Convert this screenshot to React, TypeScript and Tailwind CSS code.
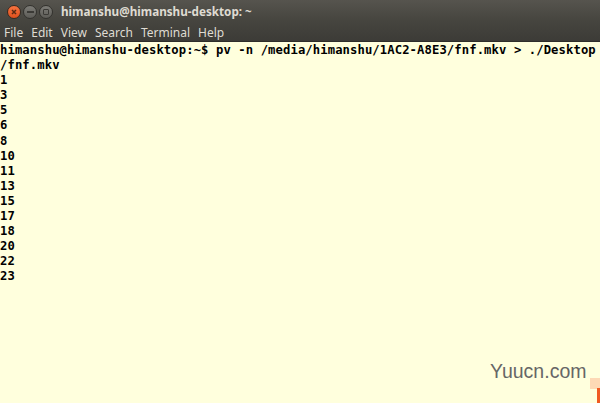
import React from "react";

const lines = [
  "himanshu@himanshu-desktop:~$ pv -n /media/himanshu/1AC2-A8E3/fnf.mkv > ./Desktop",
  "/fnf.mkv",
  "1",
  "3",
  "5",
  "6",
  "8",
  "10",
  "11",
  "13",
  "15",
  "17",
  "18",
  "20",
  "22",
  "23",
];

export default function App() {
  return (
    <div className="w-[600px] h-[403px] flex flex-col overflow-hidden bg-[#ffffdd]">
      <div className="bg-gradient-to-b from-[#56544e] via-[#46453f] to-[#3c3b37] flex flex-col border-b border-[#2e2d2a]">
        <div className="h-[24px] flex items-center pl-[7px]">
          <div className="flex items-center gap-[2px]">
            <div className="w-[14px] h-[14px] rounded-full bg-gradient-to-b from-[#f7733f] to-[#e0501b] flex items-center justify-center border border-[#3a2a20]">
              <svg width="6" height="6" viewBox="0 0 6 6">
                <path d="M1 1 L5 5 M5 1 L1 5" stroke="#5a2a14" strokeWidth="1.5" />
              </svg>
            </div>
            <div className="w-[14px] h-[14px] rounded-full bg-gradient-to-b from-[#7d7c77] to-[#5d5c57] flex items-center justify-center border border-[#33322e]">
              <div className="w-[7px] h-[2px] bg-[#3b3a36]" />
            </div>
            <div className="w-[14px] h-[14px] rounded-full bg-gradient-to-b from-[#7d7c77] to-[#5d5c57] flex items-center justify-center border border-[#33322e]">
              <div className="w-[6px] h-[6px] border-[1.5px] border-[#3b3a36] rounded-[1px]" />
            </div>
          </div>
          <div className="ml-[8px] text-[#dfdbd2] font-bold text-[11.7px] leading-none" style={{ fontFamily: '"Noto Sans", sans-serif' }}>
            himanshu@himanshu-desktop: ~
          </div>
        </div>
        <div className="h-[17px] flex items-center pl-[4px] gap-[8px] text-[#dfdbd2] text-[12px] leading-none" style={{ fontFamily: '"Noto Sans", sans-serif' }}>
          <span>File</span>
          <span>Edit</span>
          <span>View</span>
          <span>Search</span>
          <span>Terminal</span>
          <span>Help</span>
        </div>
      </div>
      <div className="relative flex-1 pt-[1px]">
        <div
          className="text-black font-bold text-[12.2px] leading-[15.1px] tracking-[0.11px] whitespace-pre"
          style={{ fontFamily: '"DejaVu Sans Mono", monospace' }}
        >
          {lines.map((l, i) => (
            <div key={i}>{l}</div>
          ))}
        </div>
        <div
          className="absolute left-[490px] top-[320px] text-[#666666] text-[19.5px] leading-none"
          style={{ fontFamily: '"Liberation Sans", Arial, sans-serif' }}
        >
          Yuucn.com
        </div>
        <div className="absolute left-[590px] top-[336px] w-[10px] h-[11px] bg-[#fdd9b5]" />
        <div className="absolute left-[597px] top-[346px] w-[3px] h-[20px] bg-[#f05a22]" />
      </div>
    </div>
  );
}
